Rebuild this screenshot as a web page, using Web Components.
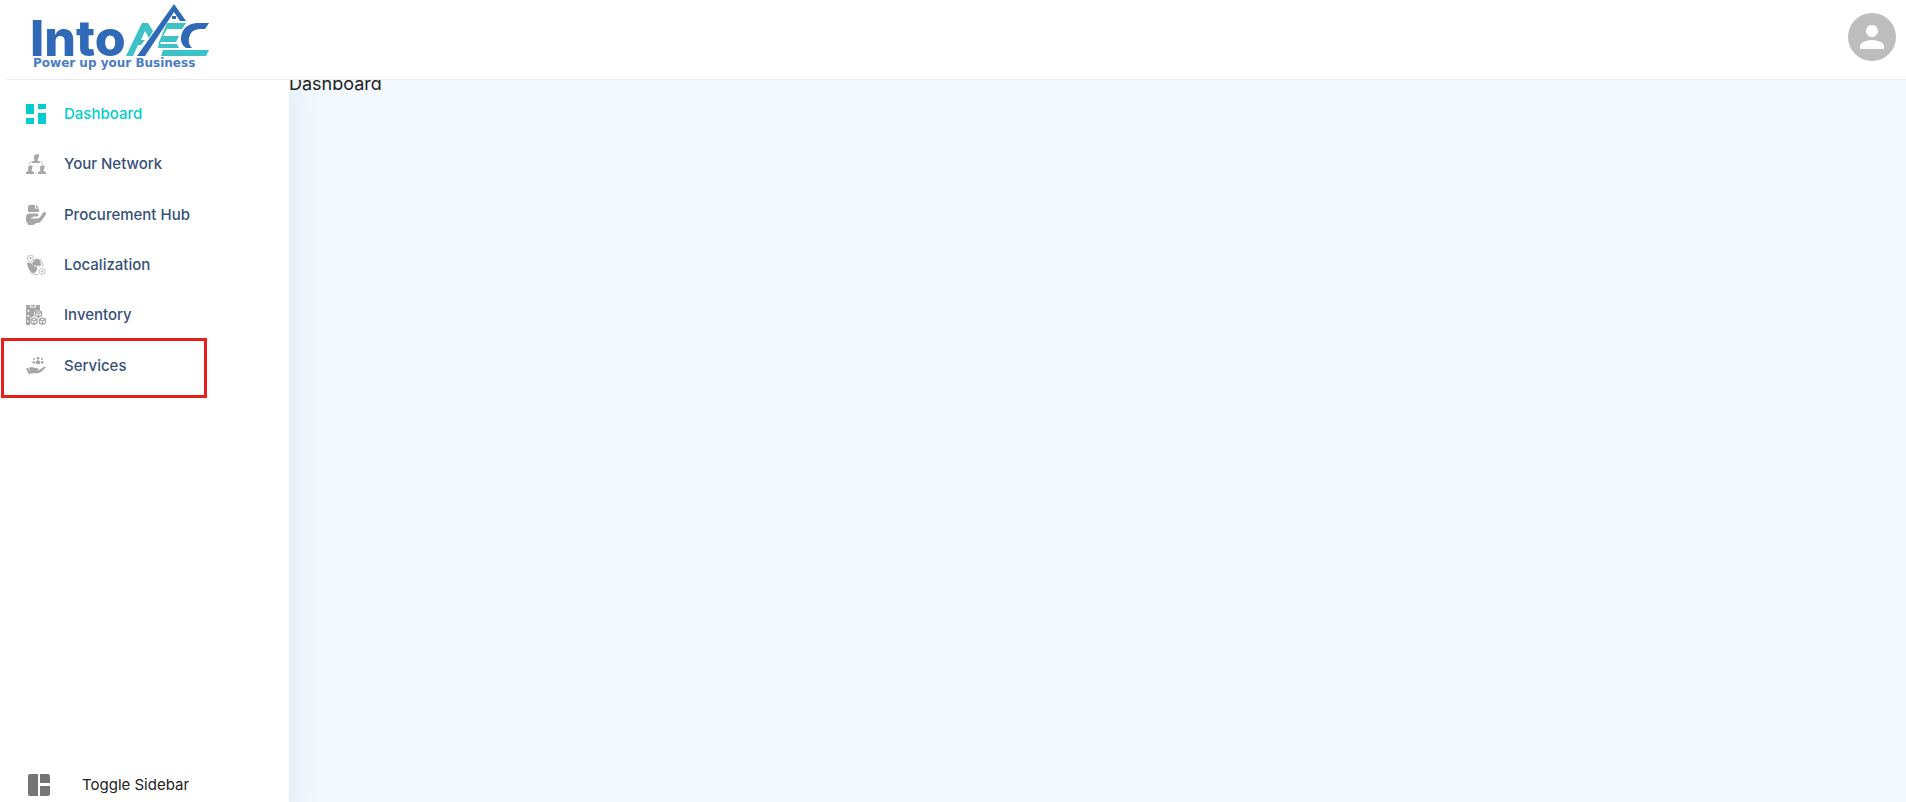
<!DOCTYPE html>
<html lang="en">
<head>
<meta charset="utf-8">
<title>IntoAEC</title>
<style>
  body { margin: 0; background: #fff; font-family: Inter, "Open Sans", sans-serif; }
</style>
</head>
<body>
<app-shell></app-shell>
<script>
class Base extends HTMLElement {
  connectedCallback() {
    if (this.shadowRoot) return;
    this.attachShadow({ mode: "open" }).innerHTML = this.view();
  }
}

const ICONS = {
  dashboard: `<path d="M0 0h8v10H0zM12 0h8v5h-8zM0 14h8v6H0zM12 9h8v11h-8z"/>`,
  network: `<path d="M8.300 1l4.700-1-.4 3.600L11.500 6v.8l2.500.7V9H6V7.500l2.500-.7V6L8 4zM2.300 12l4.200-.8-.3 3.300L5.300 17l2.700 1v2H0v-2l2.500-1-.4-2zM14.300 12l4.200-.8-.3 3.300-.9 2.500 2.700 1v2h-8v-2l2.500-1-.4-2z"/><path d="M5.500 7.500Q3.600 8.400 3.200 10.300M14.500 7.500q1.900.9 2.300 2.800M9.200 19h1.600" fill="none" stroke="currentColor" stroke-width=".8"/>`,
  procurement: `<path d="M2 7V2Q2 0 4 0h5v3.500h4V7zM10 0l3 2.700h-3z"/><path d="M0 12.500Q0 8.500 4 8.500h6.500q2 0 2 1.500t-2 1.500H7v1h-2v1h6q2.500 0 3.500-2l2-3Q17.500 6.800 19 7.200q1.800.8.600 2.800L15.500 15.500q-1.700 2.500-4.500 2.500H10q-1.500 2-3.800 2H3q-1.500 0-1.500-2Q0 17 0 15z"/>`,
  localization: `<path d="M8 5q5-3 6.500 1.500l.5 3.500-1.500 1.500-1.500-1.500-1 2-2-2-1.500 1L6 8.500zM1 7.500l4 .5 2.500 3 4 1.500-1 3.500L8 18.500Q1.500 16 1 7.500z"/><g fill="none" stroke="currentColor" stroke-width=".7"><path d="M4.500 7.500Q1.500 5 1.500 3a3 3 0 0 1 6 0q0 2-3 4.500zM4 17.500q3 2.500 8 2M14 4q3 2.500 3 8"/><circle cx="16" cy="16.500" r="3"/></g><circle cx="4.500" cy="3" r="1.100"/><circle cx="16" cy="16.500" r="1"/>`,
  inventory: `<path fill-rule="evenodd" d="M0 0h4v2.500h6V0h4v5h-3L8 7v4l-4 2v7H0zM1.500 5v1.800h1.800V5zM1.500 10v1.800h1.800V10zM1 15.500v1.500h1.500v-1.500zM5 0h4v1.500H5z"/><g stroke="currentColor" stroke-width="1.300" fill="#fff"><path d="M12.500 5.700l3 1.300v3.700l-3 1.500-3-1.500V7zM9.500 7l3 1.500 3-1.500M12.500 8.500V12"/><path d="M8 13l3 1.300V18l-3 1.500L5 18v-3.700zM5 14.500L8 16l3-1.500M8 16v3.500M16.500 13l3 1.300V18l-3 1.500-3-1.500v-3.700zM13.500 14.500l3 1.500 3-1.500M16.500 16v3.500"/></g>`,
  services: `<circle cx="12" cy="2.300" r="1.400"/><circle cx="8" cy="3" r="1"/><circle cx="16" cy="3" r="1"/><path d="M9.800 8V5.500Q12 3 14.200 5.500V8zM6.500 7.500V5.500q1.300-1 2.500 0v2zM15 7.500V5.500q1.300-1 2.500 0v2zM0 12.500l2-.7L5 17 3 18.500zM3 11.700q3-1.700 5.500.3l3.500.2q1.300.8 0 1.700l-3 .3 4 .1 4-3q2.500-1.200 3 0l-5 4.800q-1.500 1.200-4 1.100-3-.4-6 .5z"/>`
};

customElements.define("brand-logo", class extends Base {
  view() { return `
    <style>
      :host { display: block; }
      svg { display: block; overflow: visible; }
      .name { font: 800 50px Inter, sans-serif; fill: #2f69b7; }
      .tag { font: 700 12px "DejaVu Sans", sans-serif; fill: #4a7cc4; }
    </style>
    <svg width="180" height="72" viewBox="30 0 180 72" role="img" aria-label="IntoAEC, Power up your Business">
      <text class="name" x="30" y="56">Into</text>
      <path fill="#3cc2c6" d="M126 56L142 23h6l5 8-4 7-4-7-4 9h4l-4 5h-3l-5 11zM167 23h19l-4 6h-15l-4 7h16l-3 6h-15l-1 2h17l2 4h-21l1-6zM163 50h46l-3 6h-45z"/>
      <path fill="#2f69b7" d="M137 56L174 4l12 17h-6l-6-9-29 44zM209 23l-4 6h-6q-9 1-10 9-1 6 3 10h-6q-6-4-5-11 2-13 16-14z"/>
      <path fill="#2f69b7" d="M172 16h4v3h-4z"/>
      <text class="tag" x="33" y="67">Power up your Business</text>
    </svg>`; }
});

customElements.define("user-avatar", class extends Base {
  view() { return `
    <style>
      :host { display: block; }
      button { display: grid; place-items: center; width: 48px; height: 48px; padding: 0; border: 0; border-radius: 50%; background: #bdbdbd; cursor: pointer; }
      svg { width: 36px; height: 36px; fill: #fff; }
    </style>
    <button type="button" aria-label="Account"><svg viewBox="0 0 24 24"><path d="M12 12c2.210 0 4-1.790 4-4s-1.790-4-4-4-4 1.790-4 4 1.790 4 4 4zm0 2c-2.670 0-8 1.340-8 4v2h16v-2c0-2.660-5.330-4-8-4z"/></svg></button>`; }
});

customElements.define("top-bar", class extends Base {
  view() { return `
    <style>
      :host { display: block; position: relative; z-index: 2; background: #fff; padding-left: 6px; }
      header { display: flex; align-items: flex-start; justify-content: space-between; box-sizing: border-box; height: 80px; padding: 0 10px 0 24px; border-bottom: 1px solid #ebebec; }
      user-avatar { margin-top: 13px; }
    </style>
    <header><brand-logo></brand-logo><user-avatar></user-avatar></header>`; }
});

customElements.define("nav-item", class extends Base {
  view() { return `
    <style>
      :host { display: grid; position: relative; }
      a { display: flex; align-items: center; gap: 18px; padding-left: 26px; color: #36517a; font-size: 15px; font-weight: 500; line-height: 24px; text-decoration: none; }
      svg { width: 20px; height: 20px; color: #a5a6a7; fill: currentColor; }
      :host([active]) a, :host([active]) svg { color: #02cdcd; }
      :host([marked])::after { content: ""; position: absolute; left: 1px; top: -3px; box-sizing: border-box; width: 206px; height: 60px; border: 3px solid #e81e1e; pointer-events: none; }
    </style>
    <a href="#"><svg viewBox="0 0 20 20" aria-hidden="true">${ICONS[this.getAttribute("icon")]}</svg><span><slot></slot></span></a>`; }
});

customElements.define("side-bar", class extends Base {
  view() { return `
    <style>
      :host { display: flex; flex-direction: column; justify-content: space-between; position: relative; z-index: 1; background: #fff; box-shadow: 0 8px 28px 6px rgba(60, 90, 140, .1); }
      nav { display: grid; grid-auto-rows: 1fr; min-height: 302px; padding-top: 9px; }
      button { display: flex; align-items: center; gap: 32px; padding: 0 0 5px 28px; border: 0; background: none; color: #222; font: 400 15px/24px Inter, sans-serif; cursor: pointer; }
      svg { width: 22px; height: 22px; fill: #757575; }
    </style>
    <nav aria-label="Main">
      <nav-item icon="dashboard" active>Dashboard</nav-item>
      <nav-item icon="network">Your Network</nav-item>
      <nav-item icon="procurement">Procurement Hub</nav-item>
      <nav-item icon="localization">Localization</nav-item>
      <nav-item icon="inventory">Inventory</nav-item>
      <nav-item icon="services" marked>Services</nav-item>
    </nav>
    <button type="button"><svg viewBox="0 0 22 22" aria-hidden="true"><path d="M10 0v22H2q-2 0-2-2V2q0-2 2-2zM12 0h8q2 0 2 2v7H12zM12 12h10v8q0 2-2 2h-8z"/></svg>Toggle Sidebar</button>`; }
});

customElements.define("page-content", class extends Base {
  view() { return `
    <style>
      :host { display: block; margin-top: -8px; background: #f4f9ff; color: #222; font-size: 18px; line-height: 24px; }
    </style>
    <main><slot></slot></main>`; }
});

customElements.define("app-shell", class extends Base {
  view() { return `
    <style>
      :host { display: flex; flex-direction: column; min-height: 100vh; overflow: hidden; }
      .body { flex: 1; display: grid; grid-template-columns: 289px 1fr; }
    </style>
    <top-bar></top-bar>
    <div class="body"><side-bar></side-bar><page-content>Dashboard</page-content></div>`; }
});
</script>
</body>
</html>
